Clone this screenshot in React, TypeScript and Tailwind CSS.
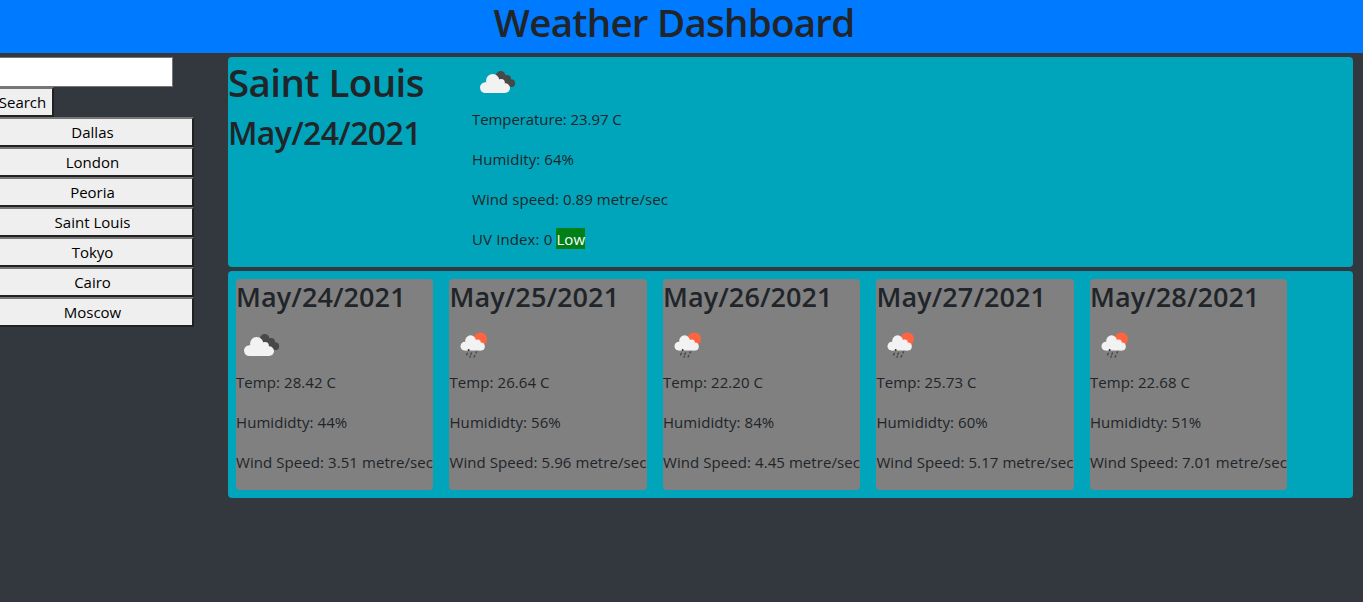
import React from "react";

const cities = ["Dallas", "London", "Peoria", "Saint Louis", "Tokyo", "Cairo", "Moscow"];

type Day = { date: string; icon: "clouds" | "rain"; temp: string; humidity: string; wind: string };

const forecast: Day[] = [
  { date: "May/24/2021", icon: "clouds", temp: "28.42", humidity: "44", wind: "3.51" },
  { date: "May/25/2021", icon: "rain", temp: "26.64", humidity: "56", wind: "5.96" },
  { date: "May/26/2021", icon: "rain", temp: "22.20", humidity: "84", wind: "4.45" },
  { date: "May/27/2021", icon: "rain", temp: "25.73", humidity: "60", wind: "5.17" },
  { date: "May/28/2021", icon: "rain", temp: "22.68", humidity: "51", wind: "7.01" },
];

function CloudsIcon() {
  return (
    <svg width="50" height="50" viewBox="0 0 50 50" className="block">
      <g fill="#484848">
        <circle cx="28.7" cy="18.8" r="4.8" />
        <circle cx="35.2" cy="21.8" r="3.8" />
        <circle cx="39.2" cy="26.2" r="3.9" />
        <path d="M24 20l5-5 6 5 4 4-1 6h-4l-8-6z" />
      </g>
      <g fill="#f2f2f2">
        <circle cx="13.4" cy="30.6" r="5.4" />
        <circle cx="20.7" cy="23.7" r="6.7" />
        <circle cx="29" cy="26" r="3.9" />
        <circle cx="33.1" cy="31.1" r="4.9" />
        <path d="M13.4 36V25.5L28 24l5 4v8z" />
      </g>
    </svg>
  );
}

function RainIcon() {
  return (
    <svg width="50" height="50" viewBox="0 0 50 50" className="block">
      <circle cx="31.3" cy="19.1" r="6.7" fill="#ff6340" />
      <g fill="#f2f2f2">
        <circle cx="15.9" cy="26.2" r="4.4" />
        <circle cx="21.6" cy="20.7" r="5.4" />
        <circle cx="28.6" cy="22.8" r="3.2" />
        <circle cx="31.8" cy="26.6" r="4" />
        <path d="M15.9 30.6V22L28 20.5l4 3v7.1z" />
      </g>
      <circle cx="19.7" cy="29.9" r="1" fill="#333" />
      <path
        stroke="#484848"
        strokeWidth="1.4"
        strokeLinecap="round"
        d="M18.3 33.3l-.7 1.6M22.5 33l-.7 1.4M27.5 31.8l-.5 1.1M21.4 36.2l-.5 1M25.8 35.6l-.7 1.4"
      />
    </svg>
  );
}

function Button({ children, className = "" }: { children: React.ReactNode; className?: string }) {
  return (
    <button
      className={`block h-[30px] border-2 border-t-[#767676] border-l-[#767676] border-r-[#212121] border-b-[#212121] bg-[#efefef] text-center text-[15px] leading-[26px] text-black ${className}`}
    >
      {children}
    </button>
  );
}

function DayCard({ day }: { day: Day }) {
  return (
    <article className="h-[210.5px] w-[197.4px] shrink-0 rounded bg-[#808080] whitespace-nowrap">
      <h3 className="mb-[5px] text-[27px] leading-[36px] font-semibold tracking-[0.09px]">{day.date}</h3>
      {day.icon === "clouds" ? <CloudsIcon /> : <RainIcon />}
      <p className="mb-4 leading-6">Temp: {day.temp} C</p>
      <p className="mb-4 leading-6">Humididty: {day.humidity}%</p>
      <p className="leading-6">Wind Speed: {day.wind} metre/sec</p>
    </article>
  );
}

export default function App() {
  return (
    <div className="h-[602px] w-full overflow-hidden bg-[#32383e] font-['Open_Sans','Noto_Sans',sans-serif] text-[15px] text-[#212529]">
      <header className="h-[53px] bg-[#007bff] pr-[15px] text-center">
        <h1 className="text-[38.5px] leading-[45px] font-semibold tracking-[-0.75px]">Weather Dashboard</h1>
      </header>
      <div className="flex pt-1">
        <aside className="-ml-[9px] w-[237px] shrink-0">
          <input
            aria-label="City"
            className="block h-[30px] w-[182px] border border-[#767676] bg-white px-2 outline-none"
          />
          <Button className="w-[63px]">Search</Button>
          <nav>
            {cities.map((city) => (
              <Button key={city} className="w-[203px]">
                {city}
              </Button>
            ))}
          </nav>
        </aside>
        <main className="flex w-[1125px] shrink-0 flex-col gap-1 tracking-[0.07px]">
          <section className="flex h-[210px] rounded bg-[#00a5bb]">
            <div className="w-[244px]">
              <h2 className="mb-1.5 text-[38.5px] leading-[51px] font-semibold tracking-[-0.58px]">Saint Louis</h2>
              <h3 className="text-[32px] leading-[38px] font-semibold tracking-[-0.65px]">May/24/2021</h3>
            </div>
            <div>
              <CloudsIcon />
              <p className="mb-4 leading-6 tracking-[-0.08px]">Temperature: 23.97 C</p>
              <p className="mb-4 leading-6">Humidity: 64%</p>
              <p className="mb-4 leading-6">Wind speed: 0.89 metre/sec</p>
              <p className="leading-6 tracking-[0.12px]">
                UV Index: 0 <span className="bg-[#008017] pt-px text-white">Low</span>
              </p>
            </div>
          </section>
          <section className="flex h-[227px] gap-[16.1px] rounded bg-[#00a5bb] p-2">
            {forecast.map((day) => (
              <DayCard key={day.date} day={day} />
            ))}
          </section>
        </main>
      </div>
    </div>
  );
}
